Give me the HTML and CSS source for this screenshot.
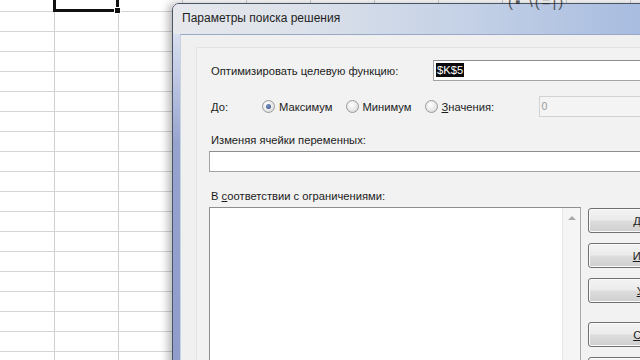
FILE: index.html
```html
<!DOCTYPE html>
<html lang="ru">
<head>
  <meta charset="UTF-8">
  <title>Параметры поиска решения</title>
  <link rel="stylesheet" href="styles.css">
</head>
<body>
  <div class="sheet">
    <div class="selection"><span class="handle"></span></div>
    <div class="behind">(▪ \(=|)</div>

    <!-- solver dialog window -->
    <div class="window">
      <div class="titlebar">Параметры поиска решения</div>
      <div class="client">
        <div class="panel">

          <div class="row row-target">
            <span class="label col-target">Оптимизировать целевую функцию:</span>
            <div class="field"><span class="sel">$K$5</span></div>
          </div>

          <div class="row row-to">
            <span class="label col-to">До:</span>
            <label class="radio"><span class="dot checked"></span>Максимум</label>
            <label class="radio"><span class="dot"></span>Минимум</label>
            <label class="radio last"><span class="dot"></span><span><u>З</u>начения:</span></label>
            <div class="field disabled">0</div>
          </div>

          <div class="label caption first">Изменяя ячейки переменных:</div>
          <div class="field wide"></div>

          <div class="label caption">В <u>с</u>оответствии с ограничениями:</div>
          <div class="constraints">
            <div class="listbox">
              <div class="scroll"><span class="arrow-up"></span></div>
            </div>
            <div class="buttons">
              <button class="btn"><u>Д</u>обавить</button>
              <button class="btn"><u>И</u>зменить</button>
              <button class="btn"><u>У</u>далить</button>
              <button class="btn gap"><u>С</u>бросить</button>
              <button class="btn">Загрузить</button>
            </div>
          </div>

        </div>
      </div>
    </div>
  </div>
</body>
</html>
```

FILE: styles.css
```css
body {
  margin: 0;
  font-family: "Liberation Sans", Arial, sans-serif;
  font-size: 11.2px;
  color: #1b1b1b;
}

/* spreadsheet behind the dialog */
.sheet {
  position: relative;
  width: 640px;
  height: 360px;
  overflow: hidden;
  background-color: #fff;
  background-image:
    linear-gradient(to bottom, #d5d5d5 1px, transparent 1px),
    linear-gradient(to right, #d0d0d0 1px, transparent 1px);
  background-size: 100% 20px, 64px 100%;
  background-position: 0 11px, 54px 0;
}

.selection {
  position: absolute;
  left: 53px;
  top: -6px;
  width: 66px;
  height: 18px;
  box-sizing: border-box;
  border: 3px solid #111;
}
.handle {
  position: absolute;
  right: -5px;
  bottom: -5px;
  width: 5px;
  height: 5px;
  background: #111;
  border: 1px solid #fff;
}

.behind {
  position: absolute;
  left: 508px;
  top: -7px;
  font-size: 15px;
  color: #222;
  z-index: 2;
  opacity: 0.7;
  letter-spacing: 2px;
}

/* window frame */
.window {
  position: absolute;
  left: 172px;
  top: 3px;
  width: 620px;
  height: 420px;
  border: 1px solid #4a5466;
  border-radius: 7px 7px 0 0;
  background: linear-gradient(to bottom, #e9edf6 0, #c7d0e8 60px, #96a3cf 140px, #8e9bc9 100%);
  box-shadow: -4px 0 9px rgba(0, 0, 0, 0.28);
  padding-left: 7px;
}

.titlebar {
  height: 30px;
  line-height: 29px;
  font-size: 12px;
  color: #1e1e1e;
  margin-left: -7px;
  padding-left: 9px;
  border-radius: 6px 6px 0 0;
  background: linear-gradient(to right, #e6e8ec 0, #dde2ea 120px, #c3d0e6 300px, #a9bde0 460px);
}

.client {
  height: 100%;
  background: #f0f0f0;
  border-top: 1px solid #99a8c6;
  border-left: 1px solid #c9d0e0;
  padding: 12px 0 0 15px;
}

.panel {
  height: 100%;
  background: #f2f2f2;
  border-top: 1px solid #e3e3e3;
  border-left: 1px solid #e3e3e3;
  padding-left: 12px;
}

.row {
  display: flex;
  align-items: center;
  height: 21px;
}
.row > * {
  flex-shrink: 0;
}
.row-target {
  margin-top: 12px;
}
.row-to {
  margin-top: 15px;
}

.label {
  padding-left: 2px;
}
.col-target {
  width: 222px;
}
.col-to {
  width: 51px;
}

.field {
  box-sizing: border-box;
  height: 21px;
  background: #fff;
  border: 1px solid #a3a3a3;
  border-top-color: #8e8e8e;
  width: 300px;
  padding: 2px 2px;
  line-height: 15px;
}
.field.disabled {
  margin-left: 14px;
  background: #f4f4f4;
  border-color: #d2d2d2;
  color: #9a9a9a;
  font-size: 10.5px;
}
.field.wide {
  margin-top: 3px;
  width: 500px;
}

.sel {
  background: #0a0a0a;
  color: #fff;
  padding: 1px 1px;
}

.radio {
  display: flex;
  align-items: center;
  gap: 4px;
  margin-right: 13px;
}
.radio.last {
  margin-right: 0;
  width: 100px;
}
.dot {
  width: 11px;
  height: 11px;
  border-radius: 50%;
  border: 1px solid #9a9a9a;
  background: radial-gradient(circle at 40% 35%, #ffffff 0, #e8e8e8 55%, #cfcfcf 100%);
  display: inline-block;
  position: relative;
}
.dot.checked::after {
  content: "";
  position: absolute;
  left: 3px;
  top: 3px;
  width: 5px;
  height: 5px;
  border-radius: 50%;
  background: radial-gradient(circle at 40% 35%, #7c92c4 0, #314a82 100%);
}

.caption {
  line-height: 15px;
  margin-top: 17px;
}
.caption.first {
  margin-top: 16px;
}

.constraints {
  display: flex;
  margin-top: 3px;
  gap: 7px;
}
.constraints > * {
  flex-shrink: 0;
}

.listbox {
  width: 372px;
  height: 200px;
  box-sizing: border-box;
  background: #fff;
  border: 1px solid #8e8e8e;
  border-right-color: #a9a9a9;
  display: flex;
  justify-content: flex-end;
}
.scroll {
  width: 17px;
  background: #f5f5f5;
  border-left: 1px solid #e6e6e6;
  position: relative;
}
.arrow-up {
  position: absolute;
  left: 5px;
  top: 8px;
  border-left: 4px solid transparent;
  border-right: 4px solid transparent;
  border-bottom: 4px solid #a9a9a9;
}

.buttons {
  display: flex;
  flex-direction: column;
  gap: 10px;
  margin-top: 1px;
}
.btn {
  width: 140px;
  height: 25px;
  font-family: "Liberation Sans", Arial, sans-serif;
  font-size: 11.2px;
  color: #1b1b1b;
  border: 1px solid #707070;
  border-radius: 3px;
  background: linear-gradient(to bottom, #f3f3f3 0, #ebebeb 48%, #dddddd 52%, #cfcfcf 100%);
  box-shadow: inset 0 0 0 1px #fbfbfb;
}
.btn.gap {
  margin-top: 9px;
}
```
